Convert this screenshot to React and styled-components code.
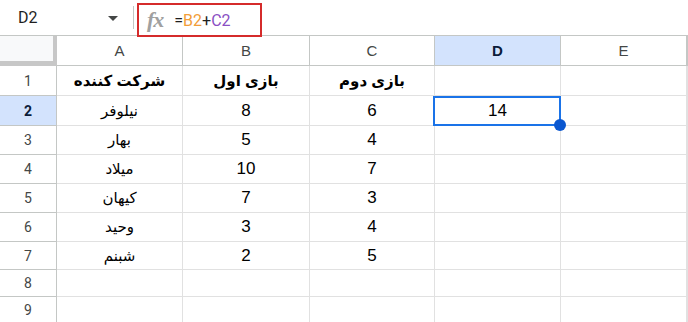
import React from "react";
import styled, { createGlobalStyle } from "styled-components";

const GlobalStyle = createGlobalStyle`
  * { box-sizing: border-box; }
  body {
    margin: 0;
    background: #ffffff;
    font-family: Roboto, "Liberation Sans", sans-serif;
    overflow: hidden;
  }
`;

const Page = styled.div`
  width: 688px;
  height: 322px;
  overflow: hidden;
  background: #ffffff;
`;

const FormulaBar = styled.div`
  display: flex;
  align-items: flex-start;
  height: 36px;
  border-bottom: 1px solid #c4c7c5;
`;

const NameBox = styled.div`
  display: flex;
  align-items: center;
  justify-content: space-between;
  width: 133px;
  height: 35px;
  padding: 0 15px 0 18px;
  font-family: Roboto, "Liberation Sans", sans-serif;
  font-size: 16px;
  color: #1f1f1f;
`;

const Caret = styled.span`
  width: 0;
  height: 0;
  border-left: 5px solid transparent;
  border-right: 5px solid transparent;
  border-top: 5px solid #444746;
  margin-top: 1px;
`;

const Divider = styled.div`
  width: 1px;
  height: 23px;
  margin-top: 6px;
  background: #c4c7c5;
`;

const FormulaBox = styled.div`
  position: relative;
  z-index: 2;
  display: flex;
  align-items: center;
  gap: 11px;
  margin-top: 3px;
  margin-left: 3px;
  width: 125px;
  height: 34px;
  padding-left: 8px;
  border: 2px solid #d52b2b;
`;

const Fx = styled.span`
  font-family: "Liberation Serif", "DejaVu Serif", serif;
  font-style: italic;
  font-weight: bold;
  font-size: 22px;
  line-height: 1;
  color: #a0a0a0;
  letter-spacing: -1px;
`;

const Formula = styled.span`
  font-family: Roboto, "Liberation Sans", sans-serif;
  font-size: 16px;
  color: #1f1f1f;
`;

const Ref = styled.span`
  color: ${(p) => p.$color};
`;

const Grid = styled.div`
  display: grid;
  grid-template-columns: 57px 126px 127px 125px 126px 126px 1fr;
  grid-auto-rows: auto;
`;

const Corner = styled.div`
  height: 30px;
  background: #f8f9fa;
  border-right: 4px solid #c7c7c7;
  border-bottom: 5px solid #c7c7c7;
`;

const ColHead = styled.div`
  display: flex;
  align-items: center;
  justify-content: center;
  height: 30px;
  border-right: 1px solid #c4c7c5;
  border-bottom: 1px solid #c4c7c5;
  background: ${(p) => (p.$active ? "#d3e3fd" : "#ffffff")};
  color: ${(p) => (p.$active ? "#0b1c3a" : "#444746")};
  font-family: "Liberation Sans", Arial, sans-serif;
  font-size: 15px;
  font-weight: ${(p) => (p.$active ? "bold" : "normal")};
`;

const RowHead = styled.div`
  display: flex;
  align-items: center;
  justify-content: center;
  height: ${(p) => p.$h}px;
  border-right: 1px solid #c4c7c5;
  border-bottom: 1px solid #c4c7c5;
  background: ${(p) => (p.$active ? "#d3e3fd" : "#ffffff")};
  color: ${(p) => (p.$active ? "#0b1c3a" : "#444746")};
  font-family: Roboto, "Liberation Sans", sans-serif;
  font-size: 14px;
  font-weight: ${(p) => (p.$active ? "bold" : "normal")};
`;

const Cell = styled.div`
  position: relative;
  display: flex;
  align-items: center;
  justify-content: center;
  height: ${(p) => p.$h}px;
  border-right: 1px solid #e1e1e1;
  border-bottom: 1px solid #e1e1e1;
  font-family: "Liberation Sans", "DejaVu Sans", sans-serif;
  font-size: ${(p) => (p.$rtl ? 15 : 17)}px;
  font-weight: ${(p) => (p.$bold ? "bold" : "normal")};
  color: #000000;
  direction: ${(p) => (p.$rtl ? "rtl" : "ltr")};
`;

const Selection = styled.div`
  position: absolute;
  z-index: 3;
  left: -2px;
  top: 0;
  right: -1px;
  bottom: -1px;
  border: 2px solid #1a73e8;
  pointer-events: none;
`;

const Handle = styled.span`
  position: absolute;
  right: -7px;
  bottom: -7px;
  width: 12px;
  height: 12px;
  border-radius: 50%;
  background: #0b57d0;
`;

const columns = ["A", "B", "C", "D", "E"];
const heights = [30, 30, 29, 29, 29, 29, 28, 27, 27];

const rows = [
  ["شرکت کننده", "بازی اول", "بازی دوم"],
  ["نیلوفر", "8", "6"],
  ["بهار", "5", "4"],
  ["میلاد", "10", "7"],
  ["کیهان", "7", "3"],
  ["وحید", "3", "4"],
  ["شبنم", "2", "5"],
  ["", "", ""],
  ["", "", ""],
];

export default function App() {
  return (
    <Page>
      <GlobalStyle />
      <FormulaBar>
        <NameBox>
          D2
          <Caret />
        </NameBox>
        <Divider />
        <FormulaBox>
          <Fx>fx</Fx>
          <Formula>
            =<Ref $color="#f29d38">B2</Ref>+<Ref $color="#8a4fc3">C2</Ref>
          </Formula>
        </FormulaBox>
      </FormulaBar>
      <Grid>
        <Corner />
        {columns.map((c) => (
          <ColHead key={c} $active={c === "D"}>
            {c}
          </ColHead>
        ))}
        <ColHead />
        {rows.map((r, i) => (
          <React.Fragment key={i}>
            <RowHead $h={heights[i]} $active={i === 1}>
              {i + 1}
            </RowHead>
            <Cell $h={heights[i]} $rtl $bold={i === 0}>
              {r[0]}
            </Cell>
            <Cell $h={heights[i]} $rtl={i === 0} $bold={i === 0}>
              {r[1]}
            </Cell>
            <Cell $h={heights[i]} $rtl={i === 0} $bold={i === 0}>
              {r[2]}
            </Cell>
            <Cell $h={heights[i]}>
              {i === 1 && "14"}
              {i === 1 && (
                <Selection>
                  <Handle />
                </Selection>
              )}
            </Cell>
            <Cell $h={heights[i]} />
            <Cell $h={heights[i]} />
          </React.Fragment>
        ))}
      </Grid>
    </Page>
  );
}
